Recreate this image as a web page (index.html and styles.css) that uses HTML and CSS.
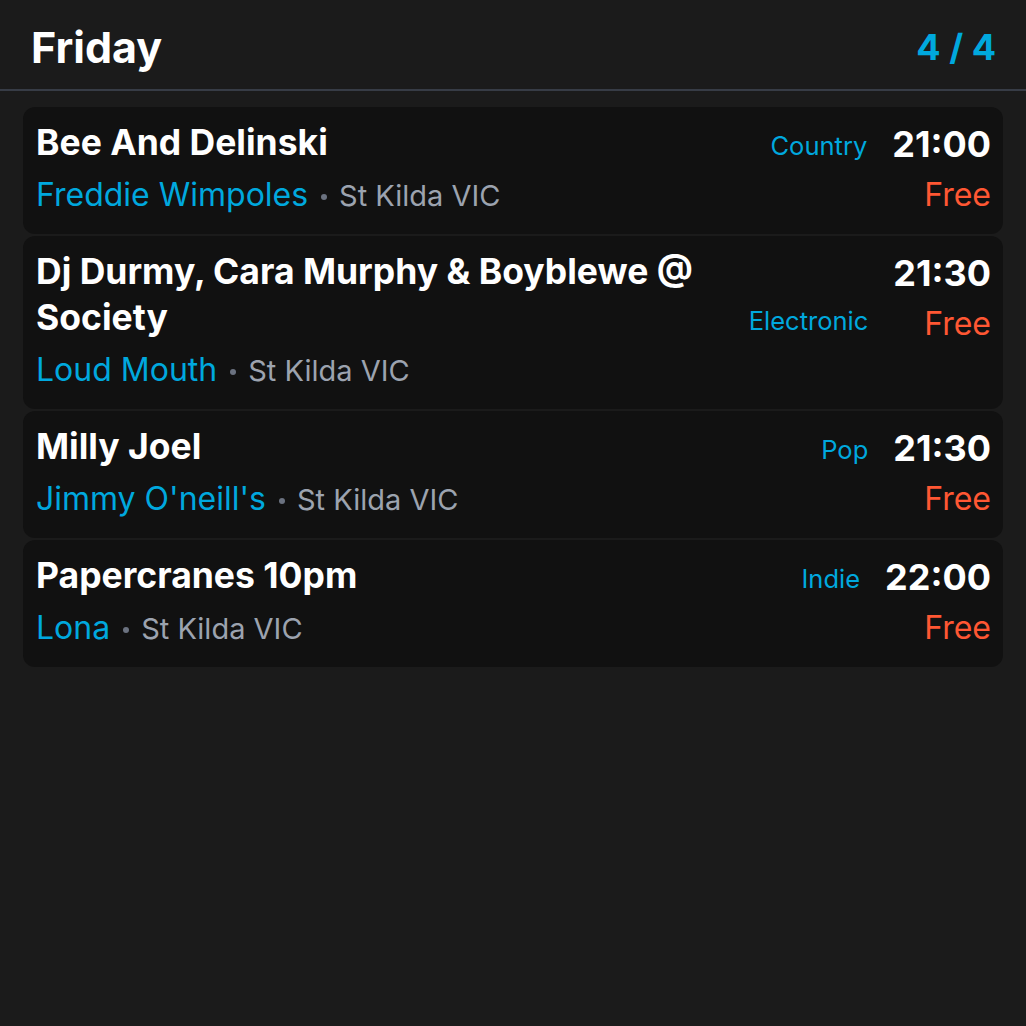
FILE: index.html
```html
<!DOCTYPE html>
<html lang="en">
<head>
<meta charset="utf-8">
<title>Friday</title>
<link rel="stylesheet" href="styles.css">
</head>
<body>
<div class="page">
  <header class="header">
    <h1 class="day">Friday</h1>
    <div class="count">4 / 4</div>
  </header>
  <ul class="list">
    <li class="card">
      <div class="main">
        <div class="top">
          <div class="title">Bee And Delinski</div>
          <div class="genre">Country</div>
        </div>
        <div class="venue"><span class="place">Freddie Wimpoles</span><span class="dot"></span><span class="loc">St Kilda VIC</span></div>
      </div>
      <div class="side">
        <div class="time">21:00</div>
        <div class="price">Free</div>
      </div>
    </li>
    <li class="card">
      <div class="main">
        <div class="top">
          <div class="title">Dj Durmy, Cara Murphy &amp; Boyblewe @ Society</div>
          <div class="genre">Electronic</div>
        </div>
        <div class="venue"><span class="place">Loud Mouth</span><span class="dot"></span><span class="loc">St Kilda VIC</span></div>
      </div>
      <div class="side">
        <div class="time">21:30</div>
        <div class="price">Free</div>
      </div>
    </li>
    <li class="card">
      <div class="main">
        <div class="top">
          <div class="title">Milly Joel</div>
          <div class="genre">Pop</div>
        </div>
        <div class="venue"><span class="place">Jimmy O'neill's</span><span class="dot"></span><span class="loc">St Kilda VIC</span></div>
      </div>
      <div class="side">
        <div class="time">21:30</div>
        <div class="price">Free</div>
      </div>
    </li>
    <li class="card">
      <div class="main">
        <div class="top">
          <div class="title">Papercranes 10pm</div>
          <div class="genre">Indie</div>
        </div>
        <div class="venue"><span class="place">Lona</span><span class="dot"></span><span class="loc">St Kilda VIC</span></div>
      </div>
      <div class="side">
        <div class="time">22:00</div>
        <div class="price">Free</div>
      </div>
    </li>
  </ul>
</div>
</body>
</html>
```

FILE: styles.css
```css
* { box-sizing: border-box; }
html, body {
  margin: 0;
  padding: 0;
  background: #1b1b1b;
  font-family: Inter, "Liberation Sans", sans-serif;
  color: #ffffff;
}
.page {
  min-height: 1026px;
  background: #1b1b1b;
}
.header {
  display: flex;
  align-items: center;
  justify-content: space-between;
  padding: 22px 30px 17px 31px;
  border-bottom: 2px solid #373c46;
}
.day {
  margin: 0;
  font-size: 43px;
  line-height: 50px;
  font-weight: 700;
}
.count {
  font-size: 36px;
  line-height: 50px;
  font-weight: 700;
  color: #00a8de;
}
.list {
  list-style: none;
  margin: 0;
  padding: 16px 23px;
  display: flex;
  flex-direction: column;
  gap: 2px;
}
.card {
  display: flex;
  align-items: flex-start;
  gap: 25px;
  background: #111111;
  border-radius: 12px;
  padding: 13px 12px 18px 13px;
}
.main {
  flex: 1;
  min-width: 0;
}
.top {
  display: flex;
  align-items: last baseline;
  gap: 40px;
}
.title {
  flex: 1;
  min-width: 0;
  font-size: 35.5px;
  line-height: 46px;
  font-weight: 700;
}
.genre {
  font-size: 25.5px;
  line-height: 40px;
  color: #00a8de;
}
.venue {
  margin-top: 9px;
  font-size: 32px;
  line-height: 40px;
  white-space: nowrap;
}
.place { color: #00a8de; }
.dot {
  display: inline-block;
  width: 6px;
  height: 6px;
  border-radius: 50%;
  background: #6b7280;
  margin: 0 12px 0 13px;
  vertical-align: 6px;
}
.loc {
  color: #9ca3af;
  font-size: 29px;
}
.side {
  text-align: right;
}
.time {
  font-size: 36px;
  line-height: 48px;
  font-weight: 700;
}
.price {
  margin-top: 5px;
  font-size: 32px;
  line-height: 43px;
  color: #ff5733;
}
```
